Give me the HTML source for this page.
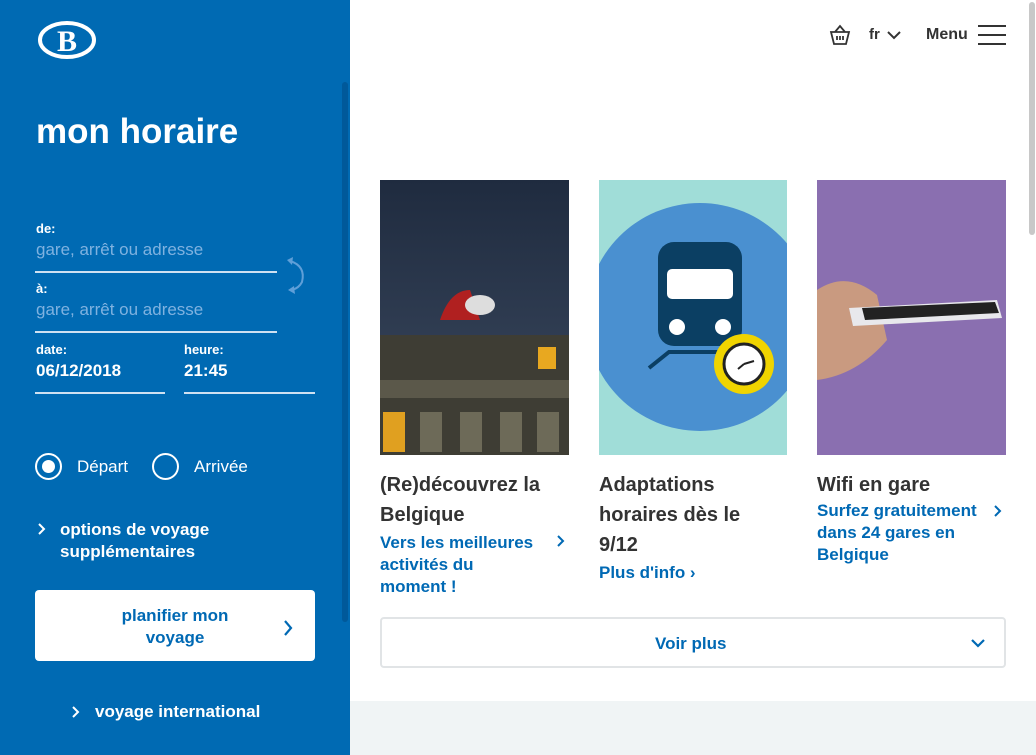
<!DOCTYPE html>
<html><head><meta charset="utf-8"><style>
*{margin:0;padding:0;box-sizing:border-box}
body{width:1036px;height:755px;overflow:hidden;font-family:"Liberation Sans",sans-serif;background:#fff;position:relative}
.side{position:absolute;left:0;top:0;width:350px;height:755px;background:#006ab3;color:#fff}
.a{position:absolute}
.lbl{font-size:13px;font-weight:bold;color:#fff}
.ph{font-size:17px;color:#7fb2e0}
.val{font-size:17px;font-weight:bold}
.line{height:2px;background:#cfe1f2}
.blue{color:#0069b4}
.card h3{font-size:20px;font-weight:bold;color:#333;line-height:30px}
.card p{font-size:17px;font-weight:bold;color:#0069b4;line-height:22px}
</style></head><body>
<div class="side">
 <svg class="a" style="left:37px;top:20px" width="62" height="40" viewBox="0 0 62 40"><ellipse cx="30" cy="20" rx="27" ry="17" fill="none" stroke="#fff" stroke-width="4"/><text x="30" y="31" text-anchor="middle" font-family="Liberation Serif" font-weight="bold" font-size="30" fill="#fff">B</text></svg>
 <div class="a" style="left:36px;top:112px;font-size:35px;font-weight:bold">mon horaire</div>
 <div class="a lbl" style="left:36px;top:221px">de:</div>
 <div class="a ph" style="left:36px;top:240px">gare, arrêt ou adresse</div>
 <div class="a line" style="left:35px;top:271px;width:242px"></div>
 <svg class="a" style="left:284px;top:256px" width="24" height="40" viewBox="0 0 24 40"><path d="M6 5 Q22 10 18 26 Q15 32 8 34" fill="none" stroke="#5f9fd8" stroke-width="2"/><path d="M3 4 L9 1 L8 9Z M4 34 L10 30 L11 38Z" fill="#5f9fd8"/></svg>
 <div class="a lbl" style="left:36px;top:281px">à:</div>
 <div class="a ph" style="left:36px;top:300px">gare, arrêt ou adresse</div>
 <div class="a line" style="left:35px;top:331px;width:242px"></div>
 <div class="a lbl" style="left:36px;top:342px">date:</div>
 <div class="a val" style="left:36px;top:361px">06/12/2018</div>
 <div class="a line" style="left:35px;top:392px;width:130px"></div>
 <div class="a lbl" style="left:184px;top:342px">heure:</div>
 <div class="a val" style="left:184px;top:361px">21:45</div>
 <div class="a line" style="left:184px;top:392px;width:131px"></div>
 <div class="a" style="left:35px;top:453px;width:27px;height:27px;border:2px solid #fff;border-radius:50%"><div style="margin:5px;width:13px;height:13px;border-radius:50%;background:#fff"></div></div>
 <div class="a" style="left:77px;top:457px;font-size:17px">Départ</div>
 <div class="a" style="left:152px;top:453px;width:27px;height:27px;border:2px solid #fff;border-radius:50%"></div>
 <div class="a" style="left:194px;top:457px;font-size:17px">Arrivée</div>
 <svg class="a" style="left:37px;top:522px" width="10" height="14"><path d="M2 2 L7 7 L2 12" fill="none" stroke="#fff" stroke-width="2"/></svg>
 <div class="a" style="left:60px;top:519px;font-size:17px;font-weight:bold;line-height:22px">options de voyage<br>supplémentaires</div>
 <div class="a" style="left:35px;top:590px;width:280px;height:71px;background:#fff;border-radius:4px"></div>
 <div class="a blue" style="left:95px;top:605px;width:160px;text-align:center;font-size:17px;font-weight:bold;line-height:22px">planifier mon<br>voyage</div>
 <svg class="a" style="left:282px;top:619px" width="12" height="18"><path d="M3 2 L9 9 L3 16" fill="none" stroke="#0069b4" stroke-width="2.2"/></svg>
 <svg class="a" style="left:71px;top:705px" width="10" height="14"><path d="M2 2 L7 7 L2 12" fill="none" stroke="#fff" stroke-width="2"/></svg>
 <div class="a" style="left:95px;top:702px;font-size:17px;font-weight:bold">voyage international</div>
 <div class="a" style="left:342px;top:82px;width:6px;height:540px;background:#00599a;border-radius:3px"></div>
</div>
<div class="a" style="left:1029px;top:2px;width:6px;height:233px;background:#c8c8c8;border-radius:3px"></div>
<svg class="a" style="left:829px;top:24px" width="22" height="22" viewBox="0 0 22 22"><path d="M2 8 H20 L17 20 H5Z M6 8 L11 2 L16 8 M8 12 V16 M11 12 V16 M14 12 V16" fill="none" stroke="#333" stroke-width="1.8"/></svg>
<div class="a" style="left:869px;top:26px;font-size:15px;font-weight:bold;color:#333">fr</div>
<svg class="a" style="left:887px;top:30px" width="14" height="10"><path d="M1 2 L7 8 L13 2" fill="none" stroke="#333" stroke-width="2"/></svg>
<div class="a" style="left:926px;top:26px;font-size:16px;font-weight:bold;color:#333">Menu</div>
<div class="a" style="left:978px;top:25px;width:28px;height:2px;background:#333"></div>
<div class="a" style="left:978px;top:34px;width:28px;height:2px;background:#333"></div>
<div class="a" style="left:978px;top:43px;width:28px;height:2px;background:#333"></div>
<svg class="a" style="left:380px;top:180px" width="189" height="275" viewBox="0 0 189 275"><defs><linearGradient id="g" x1="0" y1="0" x2="0" y2="1"><stop offset="0" stop-color="#1f2b3f"/><stop offset="1" stop-color="#3c4a60"/></linearGradient></defs><rect width="189" height="275" fill="url(#g)"/><rect x="0" y="155" width="189" height="120" fill="#3e3d34"/><rect x="0" y="200" width="189" height="18" fill="#5b584a"/><rect x="158" y="167" width="18" height="22" fill="#e8a820"/><rect x="3" y="232" width="22" height="40" fill="#e0a020"/><rect x="40" y="232" width="22" height="40" fill="#6d6a58"/><rect x="80" y="232" width="22" height="40" fill="#6d6a58"/><rect x="120" y="232" width="22" height="40" fill="#6d6a58"/><rect x="157" y="232" width="22" height="40" fill="#6d6a58"/><path d="M60 140 Q70 110 90 110 L100 140Z" fill="#b02020"/><ellipse cx="100" cy="125" rx="15" ry="10" fill="#ddd"/></svg>
<svg class="a" style="left:599px;top:180px" width="188" height="275" viewBox="0 0 188 275"><rect width="188" height="275" fill="#a0ddd8"/><circle cx="101" cy="137" r="114" fill="#4a90d0"/><rect x="59" y="62" width="84" height="104" rx="16" fill="#0b3f63"/><rect x="68" y="89" width="66" height="30" rx="5" fill="#fff"/><circle cx="78" cy="147" r="8" fill="#fff"/><circle cx="124" cy="147" r="8" fill="#fff"/><path d="M50 188 L70 172 H140" stroke="#0b3f63" stroke-width="4" fill="none"/><circle cx="145" cy="184" r="30" fill="#f0d400"/><circle cx="145" cy="184" r="20" fill="#fff" stroke="#222" stroke-width="3"/><path d="M145 184 L155 181 M145 184 L139 189" stroke="#222" stroke-width="2"/></svg>
<svg class="a" style="left:817px;top:180px" width="189" height="275" viewBox="0 0 189 275"><rect width="189" height="275" fill="#8a6fb0"/><path d="M0 110 Q30 90 60 115 L70 160 Q40 195 0 200Z" fill="#c99a80"/><path d="M32 128 L180 120 L185 138 L36 146Z" fill="#e8e8ec"/><path d="M45 128 L178 122 L182 133 L48 140Z" fill="#222"/></svg>
<div class="a card" style="left:380px;top:470px;width:190px"><h3>(Re)découvrez la Belgique</h3><p style="margin-top:2px">Vers les meilleures<br>activités du<br>moment !</p></div>
<svg class="a" style="left:556px;top:534px" width="10" height="14"><path d="M2 2 L7 7 L2 12" fill="none" stroke="#0069b4" stroke-width="2"/></svg>
<div class="a card" style="left:599px;top:470px;width:165px"><h3>Adaptations horaires dès le 9/12</h3><p style="margin-top:2px">Plus d'info ›</p></div>
<div class="a card" style="left:817px;top:470px;width:190px"><h3>Wifi en gare</h3><p style="margin-top:0px">Surfez gratuitement<br>dans 24 gares en<br>Belgique</p></div>
<svg class="a" style="left:993px;top:504px" width="10" height="14"><path d="M2 2 L7 7 L2 12" fill="none" stroke="#0069b4" stroke-width="2"/></svg>
<div class="a" style="left:380px;top:617px;width:626px;height:51px;border:2px solid #e1e4e6;border-radius:4px"></div>
<div class="a blue" style="left:655px;top:634px;font-size:17px;font-weight:bold">Voir plus</div>
<svg class="a" style="left:970px;top:638px" width="16" height="12"><path d="M2 2 L8 8 L14 2" fill="none" stroke="#0069b4" stroke-width="2.2"/></svg>
<div class="a" style="left:350px;top:701px;width:686px;height:54px;background:#f0f4f5"></div>
</body></html>
